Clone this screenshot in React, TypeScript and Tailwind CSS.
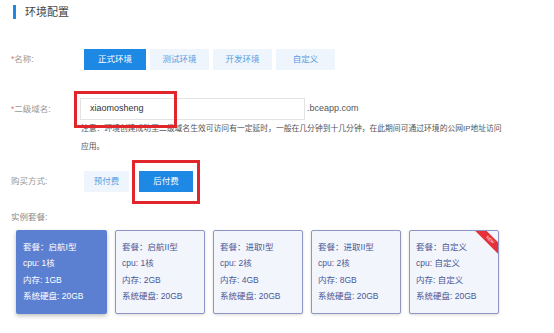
import React from 'react';

const font = { fontFamily: '"Liberation Sans", "Noto Sans CJK SC", sans-serif' };

const envTabs = ['正式环境', '测试环境', '开发环境', '自定义'];

const plans = [
  { name: '启航I型', cpu: '1核', mem: '1GB', disk: '20GB' },
  { name: '启航II型', cpu: '1核', mem: '2GB', disk: '20GB' },
  { name: '进取I型', cpu: '2核', mem: '4GB', disk: '20GB' },
  { name: '进取II型', cpu: '2核', mem: '8GB', disk: '20GB' },
  { name: '自定义', cpu: '自定义', mem: '自定义', disk: '20GB' },
];

function Label({ text, required }: { text: string; required?: boolean }) {
  return (
    <div className="w-[80px] shrink-0 pl-[11px] text-[8.5px] text-[#999]">
      {required && <span className="text-[#e57373]">*</span>}
      {text}
    </div>
  );
}

export default function App() {
  return (
    <div className="relative w-[554px] h-[333px] overflow-hidden bg-white" style={font}>
      {/* title */}
      <div className="flex items-center h-[24px] pl-[13px]">
        <div className="w-[3px] h-[14px] bg-[#1e88e5]" />
        <span className="ml-[9px] text-[11px] text-[#444]">环境配置</span>
      </div>

      {/* 名称 */}
      <div className="flex items-center mt-[25px]">
        <Label text="名称:" required />
        <div className="flex gap-[4px] ml-[4px]">
          {envTabs.map((t, i) => (
            <div
              key={t}
              className={
                i === 0
                  ? 'w-[62px] h-[21px] flex items-center justify-center text-[8.5px] bg-[#1e88e5] text-white'
                  : 'w-[59px] h-[21px] flex items-center justify-center text-[8.5px] bg-[#eef5fc] text-[#5a9be0]'
              }
            >
              {t}
            </div>
          ))}
        </div>
      </div>

      {/* 二级域名 */}
      <div className="flex items-center mt-[28px]">
        <Label text="二级域名:" required />
        <div className="w-[225px] h-[22px] border border-[#e3e3e3] flex items-center pl-[9px] text-[9px] text-[#333]">
          xiaomosheng
        </div>
        <span className="ml-[2px] text-[9px] text-[#555]">.bceapp.com</span>
      </div>
      <div className="pl-[81px] text-[7.8px] leading-[18px] text-[#555] whitespace-nowrap">
        注意：环境创建成功至二级域名生效可访问有一定延时，一般在几分钟到十几分钟，在此期间可通过环境的公网IP地址访问
        <br />
        应用。
      </div>

      {/* 购买方式 */}
      <div className="flex items-center mt-[15px]">
        <Label text="购买方式:" />
        <div className="flex gap-[10px] ml-[4px]">
          <div className="w-[45px] h-[21px] flex items-center justify-center text-[8.5px] bg-[#eef5fc] text-[#5a9be0]">
            预付费
          </div>
          <div className="w-[54px] h-[21px] flex items-center justify-center text-[8.5px] bg-[#1e88e5] text-white">
            后付费
          </div>
        </div>
      </div>

      {/* 实例套餐 */}
      <div className="mt-[19px] pl-[11px] text-[8.5px] text-[#888]">实例套餐:</div>
      <div className="flex gap-[8px] pl-[16px] mt-[6px]">
        {plans.map((p, i) => (
          <div
            key={p.name}
            className={
              i === 0
                ? 'relative w-[91px] h-[84px] rounded-[2px] bg-[#5b7fd1] text-white pl-[7px] pt-[9px] text-[8.5px] leading-[16.5px] shadow-[0_2px_4px_rgba(0,0,0,0.25)]'
                : 'relative w-[90px] h-[84px] rounded-[2px] bg-[#f2f5fc] border border-[#8f95c4] text-[#4a5896] pl-[6px] pt-[8px] text-[8.5px] leading-[16.5px] shadow-[0_1px_3px_rgba(0,0,0,0.15)] overflow-hidden'
            }
          >
            <div>套餐：{p.name}</div>
            <div>cpu: {p.cpu}</div>
            <div>内存: {p.mem}</div>
            <div>系统硬盘: {p.disk}</div>
            {i === 4 && (
              <div className="absolute top-[5px] right-[-12px] w-[40px] h-[8px] rotate-45 bg-[#e5323a] text-white text-[4px] leading-[8px] text-center">
                NEW
              </div>
            )}
          </div>
        ))}
      </div>

      {/* annotation boxes */}
      <div className="absolute left-[74px] top-[91px] w-[103px] h-[37px] border-[3px] border-[#e0262b]" />
      <div className="absolute left-[132px] top-[160px] w-[68px] h-[44px] border-[3px] border-[#e0262b]" />
    </div>
  );
}
